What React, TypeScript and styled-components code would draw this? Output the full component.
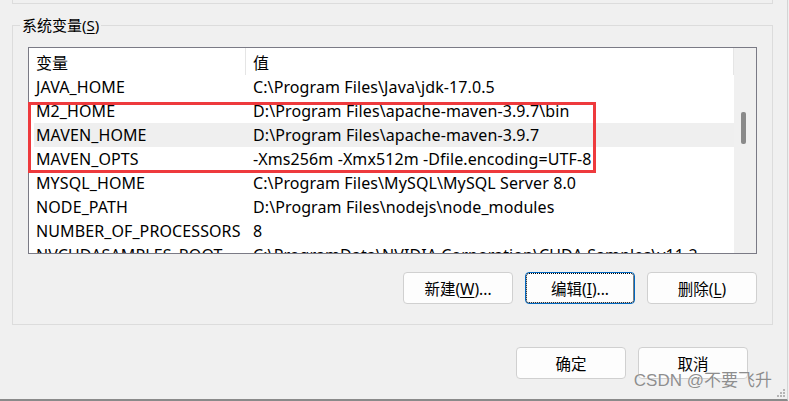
import React from "react";
import styled, { createGlobalStyle } from "styled-components";

const GlobalStyle = createGlobalStyle`
  html, body {
    margin: 0;
    padding: 0;
    background: #f0f0f0;
  }
  body {
    font-family: "Noto Sans", "Noto Sans CJK SC", sans-serif;
    color: #000;
  }
`;

const Window = styled.div`
  position: relative;
  width: 787px;
  height: 399px;
  background: #f0f0f0;
  border-right: 1px solid #d4d4d4;
  border-bottom: 2px solid #8a8a8a;
  display: flex;
  flex-direction: column;
  overflow: hidden;
`;

const PrevGroup = styled.div`
  margin: 0 14px 0 12px;
  height: 3px;
  border: 1px solid #dcdcdc;
  border-top: none;
`;

const Group = styled.div`
  position: relative;
  margin: 21px 14px 0 12px;
  border: 1px solid #dcdcdc;
  padding: 21px 15px 20px 15px;
  display: flex;
  flex-direction: column;
`;

const Legend = styled.span`
  position: absolute;
  left: 7px;
  top: -11px;
  padding: 0 2px;
  background: #f0f0f0;
  font-size: 15px;
  line-height: 20px;
`;

const Key = styled.span`
  text-decoration: underline;
  text-underline-offset: 2px;
`;

const ListBox = styled.div`
  position: relative;
  height: 205px;
  border: 1px solid #7a7a85;
  background: #fff;
  display: flex;
`;

const ListBody = styled.div`
  flex: 1;
  display: flex;
  flex-direction: column;
  overflow: hidden;
  padding-left: 5px;
`;

const Row = styled.div<{ $header?: boolean; $selected?: boolean }>`
  display: grid;
  grid-template-columns: 212px 1fr;
  height: ${(p) => (p.$header ? "27px" : "24px")};
  flex-shrink: 0;
  align-items: center;
  font-size: 16px;
  letter-spacing: 0.1px;
  white-space: nowrap;
  background: ${(p) => (p.$selected ? "#efefef" : "transparent")};
`;

const Cell = styled.div<{ $header?: boolean }>`
  padding-left: 2px;
  height: 100%;
  display: flex;
  align-items: center;
  border-right: ${(p) => (p.$header ? "1px solid #e5e5e5" : "none")};
  & + & {
    padding-left: 7px;
  }
`;

const ScrollTrack = styled.div`
  width: 22px;
  background: #f0f0f0;
  position: relative;
  flex-shrink: 0;
`;

const Thumb = styled.div`
  position: absolute;
  left: 7px;
  top: 64px;
  width: 5px;
  height: 32px;
  border-radius: 2px;
  background: #8a8a8a;
`;

const Highlight = styled.div`
  position: absolute;
  left: -1px;
  top: 54px;
  width: 562px;
  height: 65px;
  border: 3px solid #ee3a3d;
  pointer-events: none;
`;

const ButtonRow = styled.div<{ $pad?: string }>`
  display: flex;
  justify-content: flex-end;
  gap: 12px;
  padding: ${(p) => p.$pad || "0"};
`;

const Button = styled.button<{ $focused?: boolean }>`
  width: 110px;
  height: 32px;
  border-radius: 4px;
  background: #fdfdfd;
  border: 1px solid ${(p) => (p.$focused ? "#0067c0" : "#d0d0d0")};
  font-family: "Noto Sans", "Noto Sans CJK SC", sans-serif;
  font-size: 15.5px;
  color: #000;
  padding: 0;
  outline: ${(p) => (p.$focused ? "1px dotted #000" : "none")};
  outline-offset: -2px;
`;

const Watermark = styled.div`
  position: absolute;
  right: 15px;
  bottom: 8px;
  font-family: "Liberation Sans", "Noto Sans CJK SC", sans-serif;
  font-size: 17px;
  color: #8e8e8e;
  text-shadow: 0 0 1px #fff;
  white-space: nowrap;
`;

const Grip = styled.svg`
  position: absolute;
  right: 1px;
  bottom: 1px;
`;

const rows = [
  ["JAVA_HOME", "C:\\Program Files\\Java\\jdk-17.0.5"],
  ["M2_HOME", "D:\\Program Files\\apache-maven-3.9.7\\bin"],
  ["MAVEN_HOME", "D:\\Program Files\\apache-maven-3.9.7"],
  ["MAVEN_OPTS", "-Xms256m -Xmx512m -Dfile.encoding=UTF-8"],
  ["MYSQL_HOME", "C:\\Program Files\\MySQL\\MySQL Server 8.0"],
  ["NODE_PATH", "D:\\Program Files\\nodejs\\node_modules"],
  ["NUMBER_OF_PROCESSORS", "8"],
  ["NVCUDASAMPLES_ROOT", "C:\\ProgramData\\NVIDIA Corporation\\CUDA Samples\\v11.2"],
];

export default function App() {
  return (
    <Window>
      <GlobalStyle />
      <PrevGroup />
      <Group>
        <Legend>
          系统变量(<Key>S</Key>)
        </Legend>
        <ListBox>
          <ListBody>
            <Row $header>
              <Cell $header>变量</Cell>
              <Cell $header>值</Cell>
            </Row>
            {rows.map(([name, value]) => (
              <Row key={name} $selected={name === "MAVEN_HOME"}>
                <Cell>{name}</Cell>
                <Cell>{value}</Cell>
              </Row>
            ))}
          </ListBody>
          <ScrollTrack>
            <Thumb />
          </ScrollTrack>
          <Highlight />
        </ListBox>
        <ButtonRow $pad="18px 0 0 0">
          <Button>
            新建(<Key>W</Key>)...
          </Button>
          <Button $focused>
            编辑(<Key>I</Key>)...
          </Button>
          <Button>
            删除(<Key>L</Key>)
          </Button>
        </ButtonRow>
      </Group>
      <ButtonRow $pad="22px 39px 0 0">
        <Button>确定</Button>
        <Button>取消</Button>
      </ButtonRow>
      <Watermark>CSDN @不要飞升</Watermark>
      <Grip width="12" height="12" viewBox="0 0 12 12">
        {[
          [9, 1],
          [6, 4],
          [9, 4],
          [3, 7],
          [6, 7],
          [9, 7],
        ].map(([x, y]) => (
          <rect key={`${x}-${y}`} x={x} y={y + 2} width="2" height="2" fill="#b5b5b5" />
        ))}
      </Grip>
    </Window>
  );
}
